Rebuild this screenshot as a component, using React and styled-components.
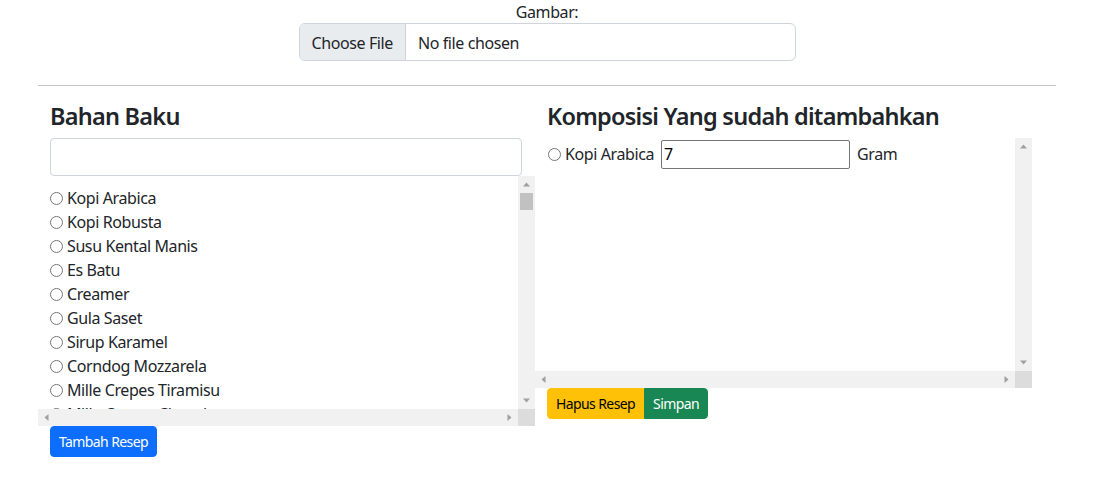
import React from "react";
import styled, { createGlobalStyle } from "styled-components";

const GlobalStyle = createGlobalStyle`
  body {
    margin: 0;
    font-family: "Segoe UI", "Noto Sans", "Open Sans", sans-serif;
    font-size: 16px;
    line-height: 1.5;
    letter-spacing: -0.4px;
    color: #212529;
    background: #fff;
  }
  * { box-sizing: border-box; }
`;

const bahanBaku = [
  "Kopi Arabica",
  "Kopi Robusta",
  "Susu Kental Manis",
  "Es Batu",
  "Creamer",
  "Gula Saset",
  "Sirup Karamel",
  "Corndog Mozzarela",
  "Mille Crepes Tiramisu",
  "Mille Crepes Chocolate",
];

const Page = styled.div`
  padding: 0 58px 30px 38px;
`;

const UploadBlock = styled.div`
  display: flex;
  flex-direction: column;
  align-items: center;
`;

const Label = styled.label`
  line-height: 24px;
  height: 23px;
`;

const FileInput = styled.input`
  width: 497px;
  height: 38px;
  padding: 6px 12px;
  font: inherit;
  letter-spacing: inherit;
  color: #212529;
  border: 1px solid #ced4da;
  border-radius: 6px;
  overflow: hidden;
  background: #fff;

  &::file-selector-button {
    font: inherit;
    letter-spacing: inherit;
    color: #212529;
    background: #e9ecef;
    border: 0;
    border-right: 1px solid #ced4da;
    border-radius: 0;
    margin: -6px 12px -6px -12px;
    padding: 6px 12px;
    height: 38px;
  }
`;

const Rule = styled.hr`
  margin: 24px 0 16px;
  border: 0;
  border-top: 1px solid #c4c4c4;
`;

const Columns = styled.div`
  display: grid;
  grid-template-columns: 497px 497px;
  align-items: start;
`;

const Column = styled.div`
  display: flex;
  flex-direction: column;
  align-items: flex-start;
`;

const Heading = styled.h4`
  margin: 0 0 7px 12px;
  font-size: 23.5px;
  font-weight: 600;
  letter-spacing: -0.75px;
  line-height: 29px;
`;

const SearchInput = styled.input`
  align-self: stretch;
  margin: 0 13px 0 12px;
  height: 38px;
  border: 1px solid #ced4da;
  border-radius: 4px;
  font: inherit;
  padding: 6px 12px;
`;

/* scroll area: viewport plus classic scrollbars */
const ScrollFrame = styled.div`
  display: grid;
  grid-template-columns: 480px 17px;
  grid-template-rows: 233px 17px;
  width: 497px;
`;

const Viewport = styled.div`
  overflow: hidden;
  padding: ${(p) => p.$pad};
`;

const Track = styled.div`
  display: flex;
  flex-direction: ${(p) => (p.$vertical ? "column" : "row")};
  justify-content: space-between;
  background: #f1f1f1;
`;

const TrackFill = styled.div`
  flex: 1;
  display: flex;
  flex-direction: column;
`;

const Thumb = styled.div`
  width: 13px;
  height: 17px;
  margin: 0 2px;
  background: #c1c1c1;
`;

const ArrowBox = styled.div`
  width: 17px;
  height: 17px;
  flex: none;
  display: flex;
  align-items: center;
  justify-content: center;
`;

const Corner = styled.div`
  background: #dcdcdc;
`;

const rotations = { up: 0, right: 90, down: 180, left: 270 };

const Arrow = ({ dir }) => (
  <ArrowBox>
    <svg width="17" height="17" viewBox="0 0 17 17">
      <polygon
        points="5,10.5 12,10.5 8.5,6.5"
        fill="#a0a0a0"
        transform={`rotate(${rotations[dir]} 8.5 8.5)`}
      />
    </svg>
  </ArrowBox>
);

const ScrollArea = ({ pad, thumb, children }) => (
  <ScrollFrame>
    <Viewport $pad={pad}>{children}</Viewport>
    <Track $vertical>
      <Arrow dir="up" />
      <TrackFill>{thumb && <Thumb />}</TrackFill>
      <Arrow dir="down" />
    </Track>
    <Track>
      <Arrow dir="left" />
      <Arrow dir="right" />
    </Track>
    <Corner />
  </ScrollFrame>
);

const Option = styled.label`
  display: flex;
  align-items: center;
  height: ${(p) => p.$h || "24px"};
  white-space: nowrap;
`;

const Radio = styled.input`
  width: 13px;
  height: 13px;
  margin: 0 4px 0 0;
  flex: none;
`;

const Amount = styled.input`
  width: 189px;
  height: 29px;
  margin: 0 7px;
  padding: 1px 2px;
  font: inherit;
  color: #000;
  border: 1px solid #767676;
  border-radius: 2px;
`;

const Button = styled.button`
  height: 31px;
  padding: 4px 8px;
  font-family: inherit;
  font-size: 14px;
  letter-spacing: -0.6px;
  line-height: 21px;
  border: 1px solid ${(p) => p.$bg};
  background: ${(p) => p.$bg};
  color: ${(p) => p.$fg};
  border-radius: 4px;
  cursor: pointer;
`;

const PrimaryButton = styled(Button)`
  margin-left: 12px;
`;

const ButtonGroup = styled.div`
  display: flex;
  margin-left: 12px;

  & > ${Button}:first-child {
    border-top-right-radius: 0;
    border-bottom-right-radius: 0;
  }
  & > ${Button}:last-child {
    border-top-left-radius: 0;
    border-bottom-left-radius: 0;
  }
`;

export default function App() {
  return (
    <Page>
      <GlobalStyle />
      <UploadBlock>
        <Label htmlFor="gambar">Gambar:</Label>
        <FileInput id="gambar" type="file" />
      </UploadBlock>
      <Rule />
      <Columns>
        <Column>
          <Heading>Bahan Baku</Heading>
          <SearchInput type="text" />
          <ScrollArea pad="10px 0 0 12px" thumb>
            {bahanBaku.map((name) => (
              <Option key={name}>
                <Radio type="radio" name="bahan" />
                {name}
              </Option>
            ))}
          </ScrollArea>
          <PrimaryButton $bg="#0d6efd" $fg="#fff">
            Tambah Resep
          </PrimaryButton>
        </Column>
        <Column>
          <Heading>Komposisi Yang sudah ditambahkan</Heading>
          <ScrollArea pad="0 0 0 13px">
            <Option $h="32px">
              <Radio type="radio" name="komposisi" />
              Kopi Arabica
              <Amount type="text" defaultValue="7" />
              Gram
            </Option>
          </ScrollArea>
          <ButtonGroup>
            <Button $bg="#ffc107" $fg="#000">
              Hapus Resep
            </Button>
            <Button $bg="#198754" $fg="#fff">
              Simpan
            </Button>
          </ButtonGroup>
        </Column>
      </Columns>
    </Page>
  );
}
